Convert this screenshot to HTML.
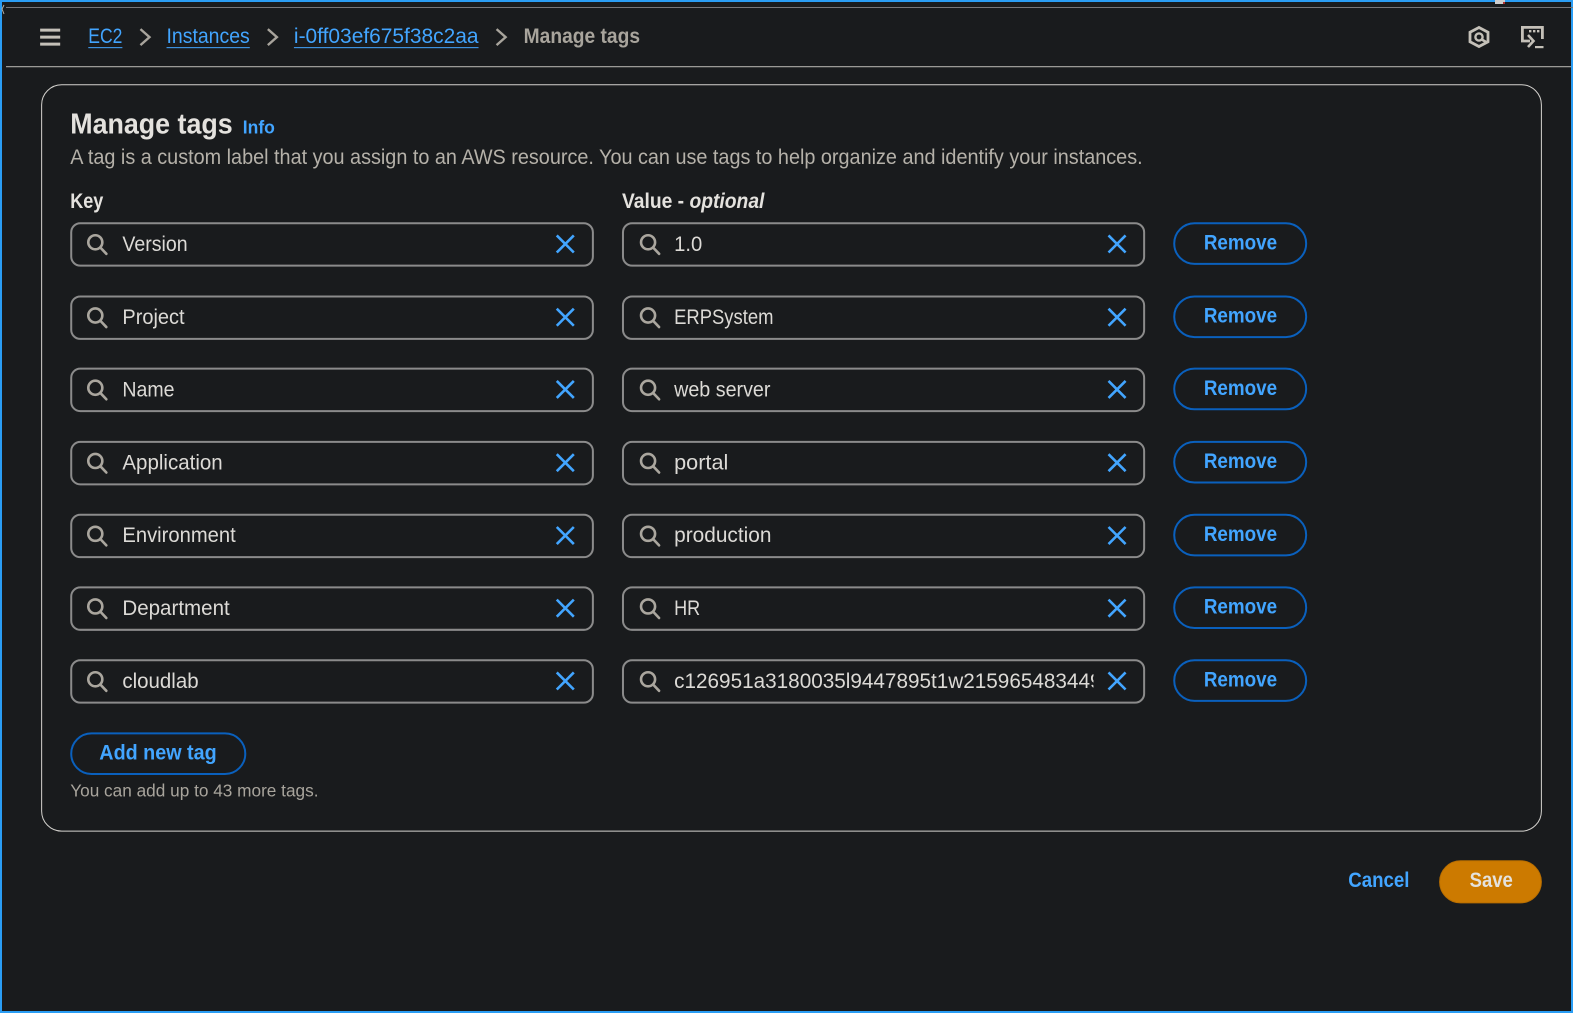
<!DOCTYPE html>
<html><head><meta charset="utf-8"><title>Manage tags</title>
<style>
html,body{margin:0;padding:0;background:#191b1d;width:1573px;height:1013px;overflow:hidden}
svg{display:block;position:absolute;left:0;top:0}
text{font-family:"Liberation Sans",sans-serif}
.v{font-size:21px;fill:#dcdad6}
.r{font-size:21px;font-weight:700;fill:#42a5ff}
.l{font-size:21px;font-weight:700;fill:#e4e2de}
.a{font-size:21px;fill:#42a5ff}
</style></head><body>
<svg width="1573" height="1013" viewBox="0 0 1568 1009.76" preserveAspectRatio="none" xmlns="http://www.w3.org/2000/svg">
<defs>
<g id="s" fill="none" stroke="#aaa69e" stroke-width="2.6"><circle cx="0" cy="0" r="7"/><path d="M5 5.2L11 11.5" stroke-linecap="round"/></g>
<g id="x" fill="none" stroke="#42a5ff" stroke-width="2.6"><path d="M-8.5-8.5L8.5 8.5M8.5-8.5L-8.5 8.5"/></g>
<g id="f"><rect x="71" y="0.5" width="520" height="42.3" rx="9" fill="none" stroke="#8b8b8b" stroke-width="2"/><rect x="621" y="0.5" width="519.5" height="42.3" rx="9" fill="none" stroke="#8b8b8b" stroke-width="2"/><use href="#s" x="95" y="19.5"/><use href="#s" x="646" y="19.5"/><use href="#x" x="563.5" y="21.2"/><use href="#x" x="1113.5" y="21.2"/><rect x="1170.5" y="0.5" width="131.5" height="40.5" rx="20.2" fill="none" stroke="#0a60bd" stroke-width="2"/><text class="r" x="1200" y="26.6" textLength="73" lengthAdjust="spacingAndGlyphs">Remove</text></g>
<clipPath id="c"><rect x="660" y="660" width="430" height="40"/></clipPath>
</defs>
<rect x="6" y="66" width="1567" height="1" fill="#bdbbb7"/>
<path d="M40 30H60M40 37H60M40 44H60" stroke="#c4c0b8" stroke-width="3" fill="none"/>
<text class="a" x="88" y="43" textLength="34" lengthAdjust="spacingAndGlyphs">EC2</text><rect x="88" y="47" width="34" height="1" fill="#42a5ff"/>
<path d="M140 29L149 37L140 45" fill="none" stroke="#a8a49c" stroke-width="2.4"/>
<text class="a" x="166" y="43" textLength="83" lengthAdjust="spacingAndGlyphs">Instances</text><rect x="166" y="47" width="83" height="1" fill="#42a5ff"/>
<path d="M267 29L276 37L267 45" fill="none" stroke="#a8a49c" stroke-width="2.4"/>
<text class="a" x="293" y="43" textLength="184" lengthAdjust="spacingAndGlyphs">i-0ff03ef675f38c2aa</text><rect x="293" y="47" width="184" height="1" fill="#42a5ff"/>
<path d="M495 29L504 37L495 45" fill="none" stroke="#a8a49c" stroke-width="2.4"/>
<text x="522" y="43" font-size="21" font-weight="700" fill="#a8a49c" textLength="116" lengthAdjust="spacingAndGlyphs">Manage tags</text>
<rect x="41.5" y="84.5" width="1495" height="744" rx="20" fill="none" stroke="#d4d2ce" stroke-width="1"/>
<text x="70" y="133" font-size="29" font-weight="700" fill="#e4e2de" textLength="162" lengthAdjust="spacingAndGlyphs">Manage tags</text>
<text class="a" x="242" y="133" style="font-size:18px;font-weight:700" textLength="32" lengthAdjust="spacingAndGlyphs">Info</text>
<text x="70" y="163.5" font-size="21" fill="#b5b1a9" textLength="1069" lengthAdjust="spacingAndGlyphs">A tag is a custom label that you assign to an AWS resource. You can use tags to help organize and identify your instances.</text>
<text class="l" x="70" y="207.5" textLength="33" lengthAdjust="spacingAndGlyphs">Key</text>
<text class="l" x="620" y="207.5" textLength="142" lengthAdjust="spacingAndGlyphs">Value - <tspan font-style="italic">optional</tspan></text>
<use href="#f" x="0" y="222"/><use href="#f" x="0" y="295"/><use href="#f" x="0" y="367"/><use href="#f" x="0" y="440"/><use href="#f" x="0" y="512.6"/><use href="#f" x="0" y="585"/><use href="#f" x="0" y="657.6"/>
<text class="v" x="122" y="250" textLength="65" lengthAdjust="spacingAndGlyphs">Version</text>
<text class="v" x="122" y="323" textLength="62" lengthAdjust="spacingAndGlyphs">Project</text>
<text class="v" x="122" y="395" textLength="52" lengthAdjust="spacingAndGlyphs">Name</text>
<text class="v" x="122" y="468" textLength="100" lengthAdjust="spacingAndGlyphs">Application</text>
<text class="v" x="122" y="540.5" textLength="113" lengthAdjust="spacingAndGlyphs">Environment</text>
<text class="v" x="122" y="613" textLength="107" lengthAdjust="spacingAndGlyphs">Department</text>
<text class="v" x="122" y="686" textLength="76" lengthAdjust="spacingAndGlyphs">cloudlab</text>
<text class="v" x="672" y="250" textLength="28" lengthAdjust="spacingAndGlyphs">1.0</text>
<text class="v" x="672" y="323" textLength="99" lengthAdjust="spacingAndGlyphs">ERPSystem</text>
<text class="v" x="672" y="395" textLength="96" lengthAdjust="spacingAndGlyphs">web server</text>
<text class="v" x="672" y="468" textLength="54" lengthAdjust="spacingAndGlyphs">portal</text>
<text class="v" x="672" y="540.5" textLength="97" lengthAdjust="spacingAndGlyphs">production</text>
<text class="v" x="672" y="613" textLength="26" lengthAdjust="spacingAndGlyphs">HR</text>
<g clip-path="url(#c)"><text class="v" x="672" y="686" textLength="426" lengthAdjust="spacingAndGlyphs">c126951a3180035l9447895t1w215965483449</text></g>
<rect x="71" y="731" width="173.5" height="40.5" rx="20.2" fill="none" stroke="#0a60bd" stroke-width="2"/>
<text class="r" x="99" y="757" textLength="117" lengthAdjust="spacingAndGlyphs">Add new tag</text>
<text x="70" y="794" font-size="17.5" fill="#a8a49c" textLength="247.5" lengthAdjust="spacingAndGlyphs">You can add up to 43 more tags.</text>
<text class="r" x="1344" y="884" textLength="61" lengthAdjust="spacingAndGlyphs">Cancel</text>
<rect x="1435" y="858" width="101.5" height="42" rx="21" fill="#cc7a00" stroke="#b86e00" stroke-width="1"/>
<text x="1465" y="884" font-size="21" font-weight="700" fill="#e4e2de" textLength="43" lengthAdjust="spacingAndGlyphs">Save</text>
</svg>
<svg width="1573" height="1013" viewBox="0 0 1573 1013" xmlns="http://www.w3.org/2000/svg">
<rect x="0" y="0" width="1573" height="2" fill="#2a9df4"/>
<rect x="0" y="0" width="2" height="1013" fill="#2a9df4"/>
<rect x="1571" y="0" width="2" height="1013" fill="#2a9df4"/>
<rect x="0" y="1011" width="1573" height="2" fill="#2a9df4"/>
<rect x="6" y="7" width="1567" height="1" fill="#77777a"/>
<rect x="1495" y="0" width="10" height="4" fill="#cfcfcf"/><rect x="1503" y="2" width="2" height="2" fill="#b03030"/>
<path d="M4 5L2 9L4 14" fill="none" stroke="#b8b2a6" stroke-width="1"/>
<path d="M1479 27.5L1488 32.2V41.8L1479 46.5L1470 41.8V32.2Z" fill="none" stroke="#c4c0b8" stroke-width="2.8"/>
<circle cx="1479" cy="37" r="3.6" fill="none" stroke="#c4c0b8" stroke-width="2.4"/><path d="M1481 39L1486 42" stroke="#c4c0b8" stroke-width="2.6"/>
<path d="M1530 41H1522.4V27.4H1542.4V39" fill="none" stroke="#c4c0b8" stroke-width="2.8"/>
<path d="M1529 30h2.4v2.4h-2.4zM1533 30h2.4v2.4h-2.4zM1537 30h2.4v2.4h-2.4z" fill="#c4c0b8"/>
<path d="M1528 35L1533.5 41L1528 47" fill="none" stroke="#c4c0b8" stroke-width="2.6"/>
<rect x="1535" y="46" width="8.5" height="2.2" fill="#c4c0b8"/>
</svg>
</body></html>
